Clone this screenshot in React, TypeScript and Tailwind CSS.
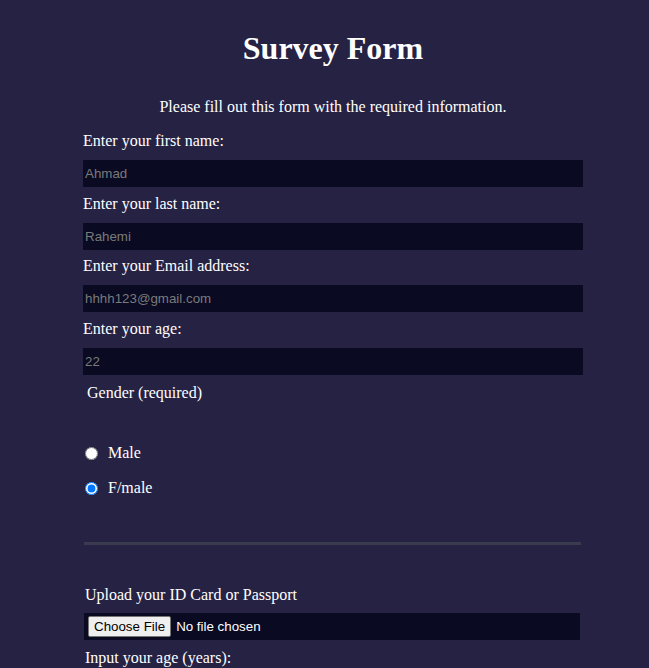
import React from "react";

const fields = [
  { label: "Enter your first name:", placeholder: "Ahmad", type: "text" },
  { label: "Enter your last name:", placeholder: "Rahemi", type: "text" },
  { label: "Enter your Email address:", placeholder: "hhhh123@gmail.com", type: "email" },
  { label: "Enter your age:", placeholder: "22", type: "number" },
];

export default function App() {
  return (
    <div className="min-h-[668px] overflow-hidden bg-[#262244] font-['Liberation_Serif',serif] text-base leading-[18px] text-white">
      <h1 className="pt-[30px] text-center text-[32px] font-bold leading-[37px] pl-[17px]">Survey Form</h1>
      <p className="mt-[31px] text-center pl-[17px]">Please fill out this form with the required information.</p>

      <form className="ml-[83px] mt-[16px] flex w-[500px] flex-col">
        {fields.map((f, i) => (
          <div key={f.label} className={`flex flex-col ${i === 1 ? "mb-[7px]" : "mb-[8px]"}`}>
            <label>{f.label}</label>
            <input
              type="text"
              placeholder={f.placeholder}
              className="mt-[10px] h-[27px] w-full bg-[#0a0a23] px-[2px] font-['Liberation_Sans',sans-serif] text-[13.33px] text-[#8a8a8a] outline-none placeholder:text-[#7a7a7a]"
            />
          </div>
        ))}

        <label className="ml-[4px] mt-[1px]">Gender (required)</label>

        <div className="mt-[42px] flex flex-col gap-[17px] pl-[2px]">
          <label className="flex items-center gap-[10px]">
            <input type="radio" name="gender" className="m-0 h-[13px] w-[13px]" />
            <span>Male</span>
          </label>
          <label className="flex items-center gap-[10px]">
            <input type="radio" name="gender" defaultChecked className="m-0 h-[13px] w-[13px] accent-[#0075ff]" />
            <span>F/male</span>
          </label>
        </div>

        <hr className="ml-[1px] mr-[2px] mt-[45px] h-[3px] border-0 bg-[#3b3b4f]" />

        <label className="ml-[2px] mt-[41px]">Upload your ID Card or Passport</label>
        <div className="ml-[1px] mr-[3px] mt-[9px] flex h-[27px] items-center bg-[#0a0a23] pl-[4px]">
          <input
            type="file"
            className="font-['Liberation_Sans',sans-serif] text-[13.33px] text-white file:mr-[5px] file:h-[21px] file:rounded-[2px] file:border file:border-[#767676] file:bg-[#efefef] file:px-[5px] file:text-black"
          />
        </div>

        <label className="ml-[2px] mt-[9px]">Input your age (years):</label>
        <div className="ml-[349px] mt-[1px] h-[20px] w-[44px] border-t border-[#5d5a74]" />
      </form>
    </div>
  );
}
